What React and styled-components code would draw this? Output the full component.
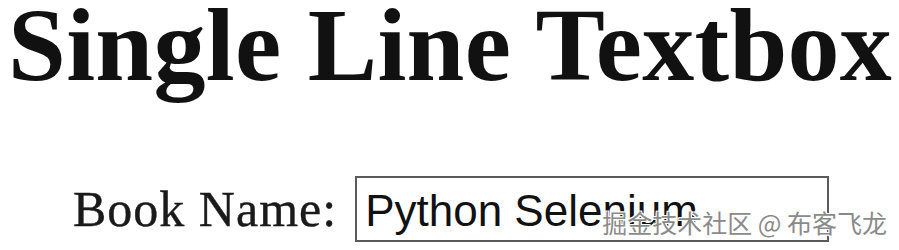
import React from "react";
import styled, { createGlobalStyle } from "styled-components";

function App() {
  return (
    <Page>
      <GlobalStyle />
      <Title>Single Line Textbox</Title>
      <Row>
        <Label htmlFor="book">Book Name:</Label>
        <TextBox id="book" type="text" value="Python Selenium" readOnly />
      </Row>
      <Watermark>掘金技术社区 @ 布客飞龙</Watermark>
    </Page>
  );
}

export default App;

const GlobalStyle = createGlobalStyle`
  html, body {
    margin: 0;
    padding: 0;
    background: #fff;
  }
`;

const Page = styled.div`
  position: relative;
  width: 899px;
  height: 250px;
  overflow: hidden;
  background: #fff;
`;

const Title = styled.h1`
  margin: -15px 0 0;
  padding-left: 8px;
  font-family: "Liberation Serif", serif;
  font-weight: bold;
  font-size: 104px;
  line-height: normal;
  letter-spacing: 0.3px;
  color: #111;
  white-space: nowrap;
`;

const Row = styled.div`
  display: flex;
  align-items: baseline;
  gap: 18px;
  margin-top: 72px;
  padding-left: 73px;
`;

const Label = styled.label`
  font-family: "Liberation Serif", serif;
  font-size: 50px;
  letter-spacing: 1px;
  color: #1a1a1a;
  -webkit-text-stroke: 0.4px #1a1a1a;
`;

const TextBox = styled.input`
  box-sizing: border-box;
  width: 474px;
  height: 66px;
  margin: 0;
  padding: 4px 8px 0;
  border: 2px solid #5a5a5a;
  outline: none;
  font-family: "Liberation Sans", sans-serif;
  font-size: 44px;
  color: #111;
  background: #fff;
`;

const Watermark = styled.div`
  position: absolute;
  top: 204px;
  right: 12px;
  font-family: "Noto Sans CJK SC", sans-serif;
  font-size: 25px;
  color: #8a8a8a;
  text-shadow: 1px 1px 0 #fff, -1px -1px 0 #fff, 1px -1px 0 #fff,
    -1px 1px 0 #fff;
  white-space: nowrap;
`;
